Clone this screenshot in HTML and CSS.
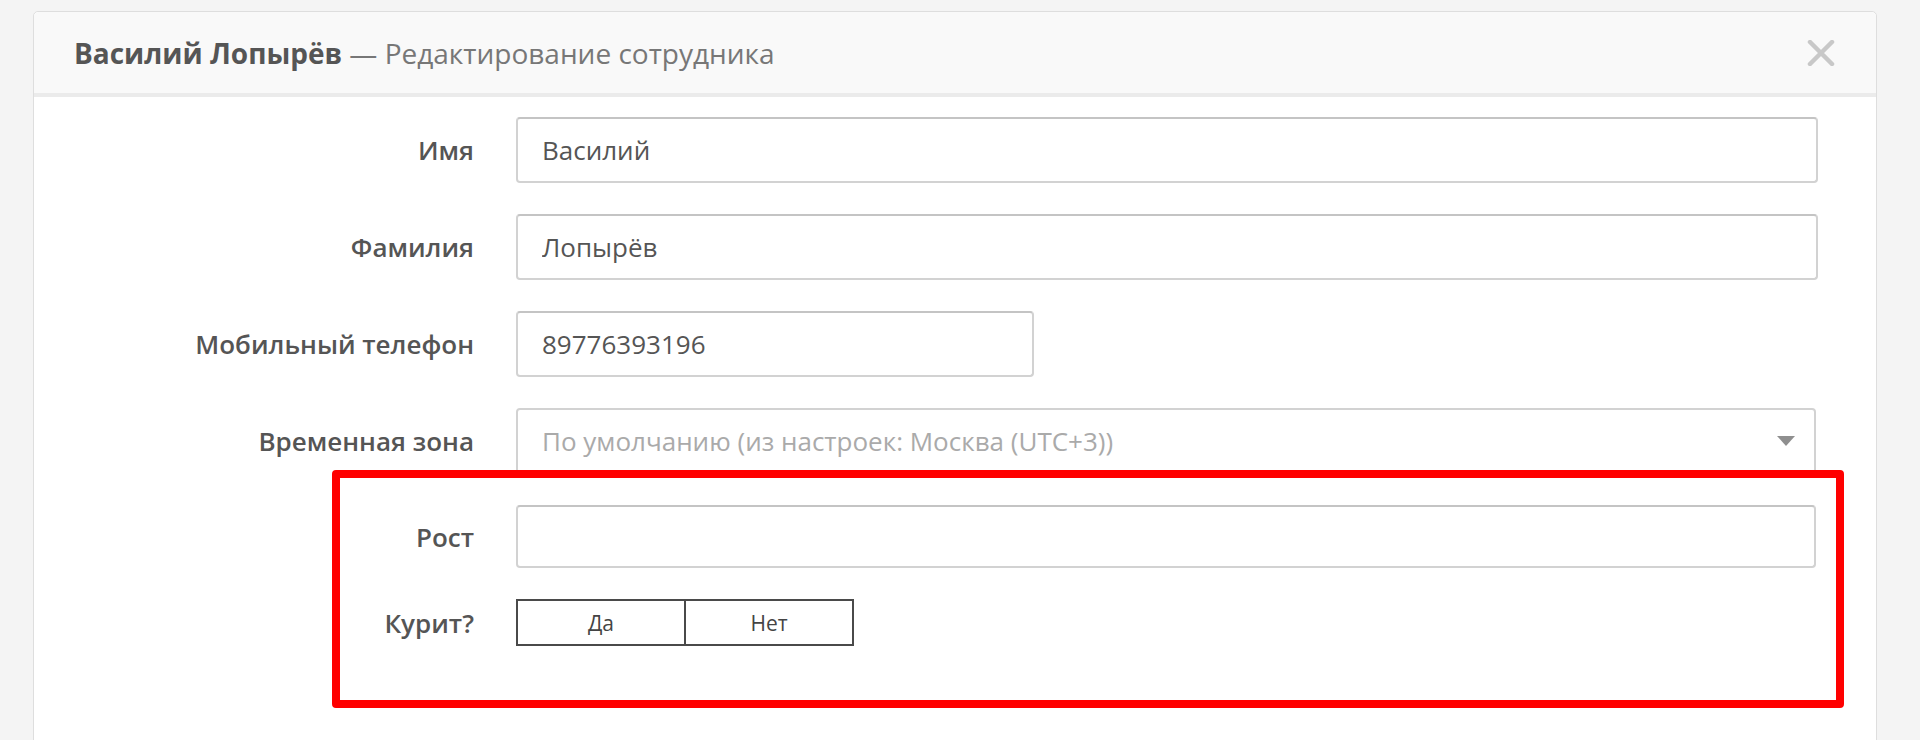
FILE: index.html
```html
<!DOCTYPE html>
<html lang="ru">
<head>
    <meta charset="UTF-8">
    <meta name="viewport" content="width=device-width, initial-scale=1.0">
    <title>Редактирование сотрудника</title>
    <link rel="stylesheet" href="styles.css">
</head>
<body>

    <div class="modal">
        <div class="modal-header">
            <h2 class="modal-title"><b>Василий Лопырёв</b> — Редактирование сотрудника</h2>
            <button class="close" type="button" aria-label="Закрыть">
                <svg width="28" height="26" viewBox="0 0 28 26">
                    <path d="M3 2 L25 24 M25 2 L3 24" stroke="#c8c8c8" stroke-width="4.5" stroke-linecap="round"/>
                </svg>
            </button>
        </div>

        <form class="modal-body">
            <div class="form-row">
                <label for="first_name">Имя</label>
                <input type="text" id="first_name" value="Василий">
            </div>
            <div class="form-row">
                <label for="last_name">Фамилия</label>
                <input type="text" id="last_name" value="Лопырёв">
            </div>
            <div class="form-row">
                <label for="phone">Мобильный телефон</label>
                <input type="text" id="phone" class="short" value="89776393196">
            </div>
            <div class="form-row">
                <label for="tz">Временная зона</label>
                <div class="select" id="tz">
                    <span>По умолчанию (из настроек: Москва (UTC+3))</span>
                    <i class="caret"></i>
                </div>
            </div>

            <!-- дополнительные поля -->
            <div class="extra">
                <div class="form-row">
                    <label for="height">Рост</label>
                    <input type="text" id="height" class="slim">
                </div>
                <div class="form-row">
                    <label>Курит?</label>
                    <div class="toggle">
                        <button type="button">Да</button>
                        <button type="button">Нет</button>
                    </div>
                </div>
                <div class="highlight"></div>
            </div>
        </form>
    </div>

</body>
</html>
```

FILE: styles.css
```css
body {
    margin: 0;
    background-color: #f4f4f4;
    font-family: "Open Sans", "Liberation Sans", sans-serif;
    color: #555;
    height: 740px;
    overflow: hidden;
}
.modal {
    margin: 11px 0 0 33px;
    width: 1842px;
    height: 760px;
    background-color: #fff;
    border: 1px solid #dedede;
    border-radius: 5px;
}
.modal-header {
    display: flex;
    align-items: center;
    justify-content: space-between;
    height: 81px;
    padding: 0 40px;
    background-color: #f9f9f9;
    border-bottom: 4px solid #ebebeb;
    border-radius: 5px 5px 0 0;
}
.modal-title {
    margin: 0;
    font-size: 28px;
    font-weight: normal;
    color: #777;
}
.modal-title b {
    font-weight: bold;
    color: #555;
}
.close {
    background: none;
    border: none;
    padding: 0;
    margin-right: 1px;
    display: flex;
}
.modal-body {
    padding: 20px 58px 0 0;
}
.form-row {
    display: grid;
    grid-template-columns: 440px 1fr;
    column-gap: 42px;
    align-items: center;
    margin-bottom: 31px;
}
.form-row label {
    text-align: right;
    font-weight: 600;
    font-size: 26px;
    color: #555;
}
input[type="text"], .select {
    box-sizing: border-box;
    height: 66px;
    width: 100%;
    padding: 0 24px;
    font-family: inherit;
    font-size: 26px;
    color: #555;
    border: 2px solid #d2d2d2;
    border-top-color: #c4c4c4;
    border-radius: 4px;
    background-color: #fff;
}
input.short {
    width: 518px;
}
input.slim {
    height: 63px;
    width: 1300px;
}
.select {
    display: flex;
    align-items: center;
    justify-content: space-between;
    width: 1300px;
    color: #aaa;
    border-top-color: #d2d2d2;
}
.caret {
    width: 0;
    height: 0;
    border-left: 9px solid transparent;
    border-right: 9px solid transparent;
    border-top: 10px solid #8f8f8f;
    margin-right: -5px;
}
.extra {
    position: relative;
}
.extra .form-row:last-of-type label {
    margin-top: 11px;
}
.toggle {
    display: flex;
    width: 338px;
}
.toggle button {
    flex: 1;
    height: 47px;
    background-color: #fff;
    border: 2px solid #4a4a4a;
    font-family: inherit;
    font-size: 21px;
    color: #444;
}
.toggle button + button {
    border-left: none;
}
.highlight {
    position: absolute;
    left: 298px;
    top: -35px;
    width: 1496px;
    height: 222px;
    border: 8px solid #ff0000;
    border-radius: 4px;
}
```
